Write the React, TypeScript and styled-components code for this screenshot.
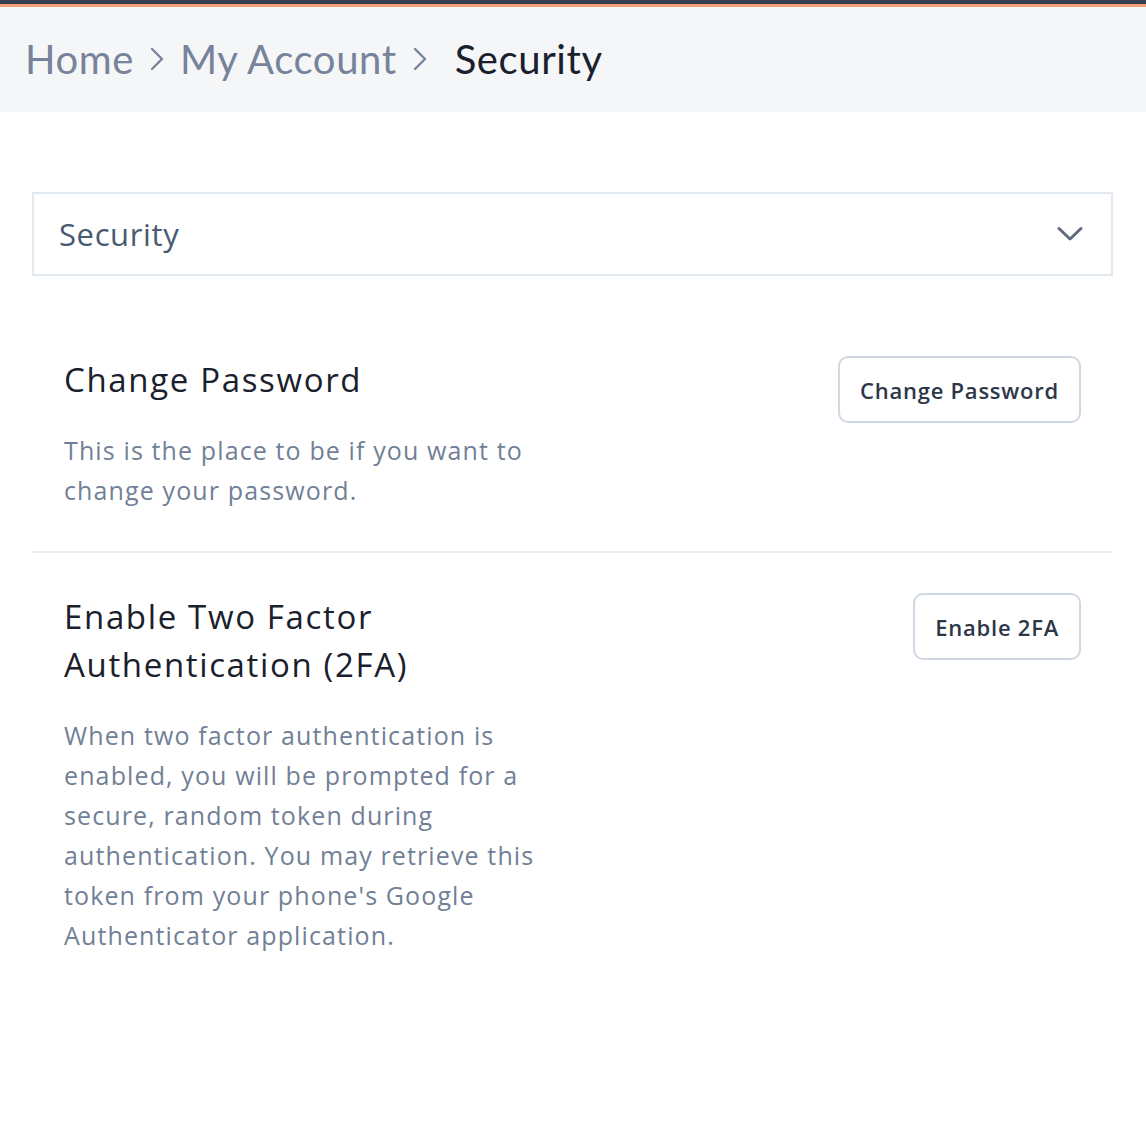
import React from "react";
import styled, { createGlobalStyle } from "styled-components";

const GlobalStyle = createGlobalStyle`
  html, body { margin: 0; padding: 0; background: #ffffff; }
  body { font-family: "Open Sans", "Noto Sans", sans-serif; -webkit-font-smoothing: antialiased; }
  * { box-sizing: border-box; }
`;

const Page = styled.div`
  width: 1146px;
  min-height: 1128px;
  background: #fff;
`;

const Header = styled.header`
  border-top: 4px solid #364152;
  box-shadow: inset 0 3px 0 #f6a07a;
  background: #f5f6f8;
  height: 112px;
  padding: 0 25px;
  display: flex;
  align-items: center;
`;

const Crumbs = styled.nav`
  display: flex;
  align-items: center;
  gap: 16px;
  font-family: "Lato", sans-serif;
  font-size: 40px;
  color: #76839a;
  padding-top: 2px;
`;

const Crumb = styled.span<{ $current?: boolean }>`
  color: ${(p) => (p.$current ? "#1a202c" : "#76839a")};
  margin-left: ${(p) => (p.$current ? "12px" : "0")};
  letter-spacing: 0.015em;
`;

const Main = styled.main`
  padding: 80px 33px 0 32px;
`;

const Select = styled.div`
  height: 84px;
  border: 2px solid #e2e8f0;
  display: flex;
  align-items: center;
  justify-content: space-between;
  padding: 0 28px 0 25px;
  font-size: 31px;
  letter-spacing: 0.02em;
  color: #4a5a70;
`;

const Section = styled.section<{ $top: number; $bottom: number }>`
  display: flex;
  justify-content: space-between;
  align-items: flex-start;
  padding: ${(p) => p.$top}px 32px ${(p) => p.$bottom}px 32px;
`;

const Divider = styled.hr`
  border: none;
  height: 2px;
  background: #e9eef3;
  margin: 0;
`;

const Text = styled.div`
  max-width: 490px;
`;

const Title = styled.h2`
  margin: 0;
  font-size: 33px;
  line-height: 48px;
  font-weight: 500;
  letter-spacing: 0.05em;
  color: #1a202c;
`;

const Desc = styled.p`
  margin: 26px 0 0;
  font-size: 25px;
  line-height: 40px;
  letter-spacing: 0.045em;
  color: #718096;
`;

const Button = styled.button`
  font-family: inherit;
  font-size: 22px;
  font-weight: 600;
  letter-spacing: 0.035em;
  color: #2d3748;
  background: #fff;
  border: 2px solid #cfd8e3;
  border-radius: 10px;
  height: 67px;
  padding: 0 20px;
  cursor: pointer;
`;

const Chevron = () => (
  <svg width="26" height="16" viewBox="0 0 26 16" fill="none">
    <path d="M2 2.5 L13 13 L24 2.5" stroke="#606a7a" strokeWidth="3" strokeLinecap="round" strokeLinejoin="round" />
  </svg>
);

const Sep = () => (
  <svg width="14" height="24" viewBox="0 0 14 24" fill="none">
    <path d="M2 2 L12 12 L2 22" stroke="#76839a" strokeWidth="2.4" strokeLinecap="round" strokeLinejoin="round" />
  </svg>
);

export default function App() {
  return (
    <Page>
      <GlobalStyle />
      <Header>
        <Crumbs>
          <Crumb>Home</Crumb>
          <Sep />
          <Crumb>My Account</Crumb>
          <Sep />
          <Crumb $current>Security</Crumb>
        </Crumbs>
      </Header>
      <Main>
        <Select>
          <span>Security</span>
          <Chevron />
        </Select>
        <Section $top={80} $bottom={41}>
          <Text>
            <Title>Change Password</Title>
            <Desc>This is the place to be if you want to change your password.</Desc>
          </Text>
          <Button>Change Password</Button>
        </Section>
        <Divider />
        <Section $top={40} $bottom={40}>
          <Text>
            <Title>Enable Two Factor Authentication (2FA)</Title>
            <Desc>
              When two factor authentication is enabled, you will be prompted for a secure, random token during
              authentication. You may retrieve this token from your phone's Google Authenticator application.
            </Desc>
          </Text>
          <Button>Enable 2FA</Button>
        </Section>
      </Main>
    </Page>
  );
}
